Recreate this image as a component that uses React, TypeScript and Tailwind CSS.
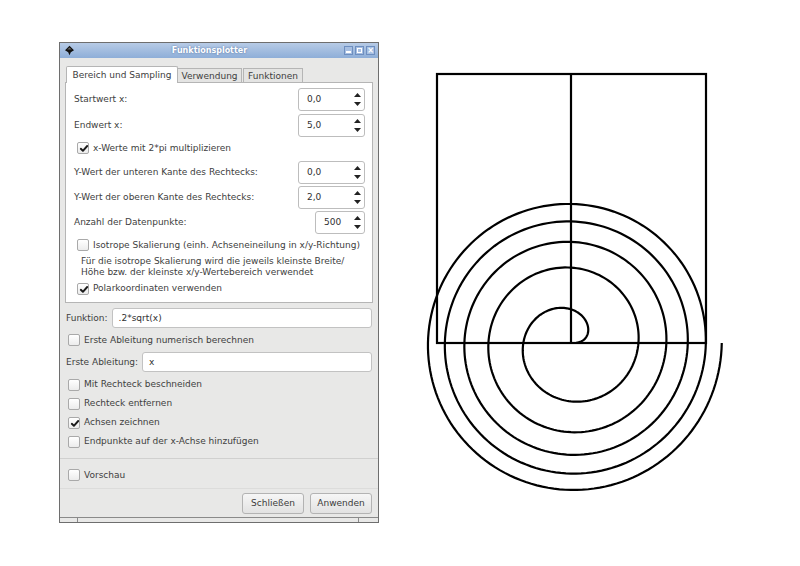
import React from "react";

const font = { fontFamily: '"DejaVu Sans", Verdana, sans-serif' };

function Check({ checked }: { checked?: boolean }) {
  return (
    <span className="relative inline-flex h-[12px] w-[12px] shrink-0 items-center justify-center rounded-[2px] border border-[#a9a9a9] bg-gradient-to-b from-[#ffffff] to-[#ececec]">
      {checked && (
        <svg width="10" height="9" viewBox="0 0 10 9" className="absolute left-[0.5px] top-[1px]">
          <path d="M1.8 4.8 L3.9 6.8 L8.2 2" fill="none" stroke="#1a1a1a" strokeWidth="1.9" strokeLinecap="round" strokeLinejoin="round" />
        </svg>
      )}
    </span>
  );
}

function Spin({ value, w = "w-[67px]" }: { value: string; w?: string }) {
  return (
    <div className={`flex h-[23px] ${w} items-center rounded-[3px] border border-[#bdbdbd] bg-white pl-[8px] pr-[3px]`}>
      <span className="flex-1 text-[#303030]">{value}</span>
      <div className="flex h-full flex-col items-center justify-center gap-[5px]">
        <svg width="7" height="4" viewBox="0 0 7 4"><path d="M0 4 L3.5 0 L7 4 Z" fill="#222" /></svg>
        <svg width="7" height="4" viewBox="0 0 7 4"><path d="M0 0 L3.5 4 L7 0 Z" fill="#222" /></svg>
      </div>
    </div>
  );
}

function SpinRow({ label, value, mt, w }: { label: string; value: string; mt: string; w?: string }) {
  return (
    <div className={`flex items-center justify-between ${mt}`}>
      <span>{label}</span>
      <Spin value={value} w={w} />
    </div>
  );
}

function CheckRow({ label, checked, h, mt = "" }: { label: string; checked?: boolean; h: string; mt?: string }) {
  return (
    <div className={`flex items-center gap-[4px] ${h} ${mt}`}>
      <Check checked={checked} />
      <span>{label}</span>
    </div>
  );
}

function Spiral() {
  const cx = 171;
  const cy = 343;
  const s = 134.5;
  const pts: string[] = [];
  const N = 800;
  const max = 10 * Math.PI;
  for (let i = 0; i <= N; i++) {
    const t = (i / N) * max;
    const r = 0.2 * Math.sqrt(t) * s;
    pts.push(`${(cx + r * Math.cos(t)).toFixed(2)},${(cy - r * Math.sin(t)).toFixed(2)}`);
  }
  return (
    <svg width="400" height="566" viewBox="0 0 400 566" className="shrink-0">
      <rect x={37} y={74} width={269} height={269} fill="none" stroke="#000" strokeWidth="2.2" />
      <line x1={171} y1={74} x2={171} y2={343} stroke="#000" strokeWidth="2.2" />
      <line x1={37} y1={343} x2={306} y2={343} stroke="#000" strokeWidth="2.2" />
      <polyline points={pts.join(" ")} fill="none" stroke="#000" strokeWidth="2.2" />
    </svg>
  );
}

export default function App() {
  return (
    <div className="flex h-[566px] w-[800px] bg-white" style={font}>
      <div className="ml-[59px] mt-[42px] flex h-[481px] w-[320px] shrink-0 flex-col border border-[#6e6e6e] bg-[#e8e8e7] text-[9px] leading-none text-[#404040]">
        {/* title bar */}
        <div className="flex h-[15px] items-center bg-gradient-to-b from-[#b7cbe6] to-[#8eaed8] px-[3px]">
          <svg width="11" height="11" viewBox="0 0 11 11" className="ml-[1px]">
            <path d="M5.5 0.8 L10 5.2 L6.8 7.2 L5.5 10.2 L4.2 7.2 L1 5.2 Z" fill="#111" />
            <path d="M3.2 4.4 L5.5 2.4 L7.8 4.4 Z" fill="#666" />
          </svg>
          <span className="flex-1 text-center text-[8px] font-bold text-white [text-shadow:0_0_2px_#4a6a9a]">Funktionsplotter</span>
          <div className="flex gap-[2px]">
            <span className="flex h-[9px] w-[9px] items-end justify-center border border-[#6e8fc0] bg-[#a7bfe2] pb-[1px]"><span className="h-[2px] w-[5px] bg-white" /></span>
            <span className="flex h-[9px] w-[9px] items-center justify-center border border-[#6e8fc0] bg-[#a7bfe2]"><span className="h-[5px] w-[5px] border border-white" /></span>
            <span className="flex h-[9px] w-[9px] items-center justify-center border border-[#6e8fc0] bg-[#a7bfe2] text-[8px] font-bold text-white">×</span>
          </div>
        </div>

        <div className="flex flex-1 flex-col px-[5px] pt-[8px]">
          {/* tabs */}
          <div className="flex h-[17px] items-end pl-[1px]">
            <div className="z-10 flex h-[17px] w-[112px] items-center justify-center rounded-t-[2px] border border-b-0 border-[#b5b5b5] bg-white">Bereich und Sampling</div>
            <div className="flex h-[15px] w-[64px] items-center justify-center border border-l-0 border-b-0 border-[#b5b5b5] bg-[#e4e4e3]">Verwendung</div>
            <div className="ml-[1px] flex h-[15px] w-[60px] items-center justify-center border border-b-0 border-[#b5b5b5] bg-[#e4e4e3]">Funktionen</div>
          </div>
          {/* panel */}
          <div className="-mt-px flex h-[221px] flex-col border border-[#b5b5b5] bg-white pl-[8px] pr-[7px] pt-[5px]">
            <SpinRow label="Startwert x:" value="0,0" mt="" />
            <SpinRow label="Endwert x:" value="5,0" mt="mt-[3px]" />
            <div className="pl-[3px]"><CheckRow label="x-Werte mit 2*pi multiplizieren" checked h="h-[22px]" /></div>
            <SpinRow label="Y-Wert der unteren Kante des Rechtecks:" value="0,0" mt="mt-[2px]" />
            <SpinRow label="Y-Wert der oberen Kante des Rechtecks:" value="2,0" mt="mt-[2px]" />
            <SpinRow label="Anzahl der Datenpunkte:" value="500" mt="mt-[2px]" w="w-[50px]" />
            <div className="pl-[3px]"><CheckRow label="Isotrope Skalierung (einh. Achseneineilung in x/y-Richtung)" h="h-[22px]" /></div>
            <div className="flex flex-col pl-[7px] leading-[11px]">
              <span>Für die isotrope Skalierung wird die jeweils kleinste Breite/</span>
              <span>Höhe bzw. der kleinste x/y-Wertebereich verwendet</span>
            </div>
            <div className="pl-[3px]"><CheckRow label="Polarkoordinaten verwenden" checked h="h-[21px]" /></div>
          </div>

          {/* Funktion */}
          <div className="mt-[5px] flex items-center gap-[4px] pl-[1px] pr-[1px]">
            <span>Funktion:</span>
            <div className="flex h-[20px] flex-1 items-center rounded-[3px] border border-[#c2c2c2] bg-white pl-[6px] text-[#303030]">.2*sqrt(x)</div>
          </div>
          <div className="pl-[3px]"><CheckRow label="Erste Ableitung numerisch berechnen" h="h-[24px]" /></div>
          <div className="flex items-center gap-[4px] pl-[1px] pr-[1px]">
            <span>Erste Ableitung:</span>
            <div className="flex h-[20px] flex-1 items-center rounded-[3px] border border-[#c2c2c2] bg-white pl-[6px] text-[#303030]">x</div>
          </div>
          <div className="mt-[3px] flex flex-col pl-[3px]">
            <CheckRow label="Mit Rechteck beschneiden" h="h-[19px]" />
            <CheckRow label="Rechteck entfernen" h="h-[19px]" />
            <CheckRow label="Achsen zeichnen" checked h="h-[19px]" />
            <CheckRow label="Endpunkte auf der x-Achse hinzufügen" h="h-[19px]" />
          </div>
          <div className="-mx-[5px] mt-[7px] h-[2px] border-t border-[#d0d0cf] bg-transparent" />
          <div className="pl-[3px]"><CheckRow label="Vorschau" h="h-[26px]" mt="mt-[2px]" /></div>
          <div className="-mx-[5px] h-[1px] bg-[#dcdcdb]" />
          <div className="mt-[4px] flex justify-end gap-[6px] pr-[1px]">
            <button className="h-[21px] w-[62px] rounded-[3px] border border-[#b3b3b3] bg-gradient-to-b from-[#f6f6f6] to-[#e2e2e2] text-[#3a3a3a]">Schließen</button>
            <button className="h-[21px] w-[62px] rounded-[3px] border border-[#b3b3b3] bg-gradient-to-b from-[#f6f6f6] to-[#e2e2e2] text-[#3a3a3a]">Anwenden</button>
          </div>
        </div>
        <div className="flex h-[5px] border-t border-[#8a8a8a] bg-[#e8e8e7]">
          <div className="w-[18px] border-r border-[#8a8a8a]" />
          <div className="flex-1" />
          <div className="w-[20px] border-l border-[#8a8a8a]" />
        </div>
      </div>
      <div className="ml-[21px]"><Spiral /></div>
    </div>
  );
}
